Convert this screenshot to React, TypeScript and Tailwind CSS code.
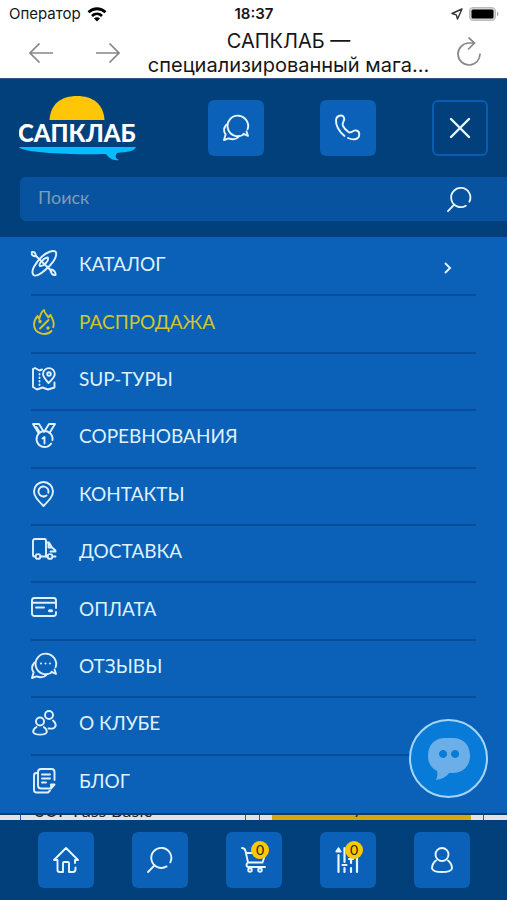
import type { ReactNode } from "react";

function Icon({ children, className = "size-[26px]" }: { children: ReactNode; className?: string }) {
  return (
    <svg viewBox="0 0 26 26" className={"shrink-0 overflow-visible " + className} fill="none" stroke="currentColor" strokeWidth="1.9" strokeLinecap="round" strokeLinejoin="round" aria-hidden="true">
      {children}
    </svg>
  );
}

const chatShape = (
  <>
    <path d="M24.600 14.300A10.300 10.300 0 1 0 19.800 20l.8-1.200 4.400 2-1.500-4.300" />
    <path d="M3.400 9.600C.4 13 .6 16.600 2.600 19.400L1 25l4.600-1.600c4.500 1.600 8.400.4 10.800-2.400" />
  </>
);
const searchShape = (
  <>
    <path d="M23.300 15.300A10 10 0 1 0 19.600 19.400" />
    <path d="M7.500 18.300 1 25" />
  </>
);

const menu: { label: string; icon: ReactNode; sale?: boolean; more?: boolean }[] = [
  {
    label: "КАТАЛОГ",
    more: true,
    icon: (
      <>
        <path d="M2.500 24C-1 20 5 11.500 10.500 6 16 .8 22-1 24.500.5c2 3-.5 9-6 14.500S6 26.500 2.500 24Z" />
        <path d="M8.800 15c-1.400-2.500 4.500-8.500 8-8.500 1.500 3-4.500 9.500-8 8.500Z" />
        <path d="M4.500 4.500 20.500 20" />
        <path d="M1 1c-.8 2.500.6 4.500 3.500 4.200C5 2.500 3.500.4 1 1ZM19.500 18.500c3-.3 5.500 2.700 5 5.500-3 .5-5-2-5-5.500Z" />
      </>
    ),
  },
  {
    label: "РАСПРОДАЖА",
    sale: true,
    icon: (
      <>
        <path d="M20.500 22C15 27.600 3.300 25 3 15.500 2.900 11.500 5 9 6.500 7l1.800 3C9.300 6.500 9.800 3 13 1c.2 3 3 5 4.300 7.500L19.500 6c1.600 3 3.500 6 3.200 10l-.6 2.200" />
        <path d="m9 19.500 8.500-8.500" />
        <circle cx="9" cy="12.500" r=".8" fill="currentColor" />
        <circle cx="17" cy="19" r=".8" fill="currentColor" />
      </>
    ),
  },
  {
    label: "SUP-ТУРЫ",
    icon: (
      <>
        <path d="M11 3.500 8.500 4.500 4 2 2 3v18l4 2.500 5.500-2 5.500 2 6.500-2V16.500" />
        <path d="M17.500 17C13.500 12.500 12 10.500 12 8a5.800 5.800 0 0 1 11.800 0c0 2.500-2.600 5.500-6.300 9Z" />
        <circle cx="18" cy="8" r="1.800" />
        <path d="M8.500 8v12" strokeDasharray=".5 3" />
      </>
    ),
  },
  {
    label: "СОРЕВНОВАНИЯ",
    icon: (
      <>
        <path d="M7.500 10 2 1h6l4 6.500M18.500 10 24 1h-6L13 9M5.500 4l3 5" />
        <path d="M20.200 20.500a8 8 0 1 1 1.300-3.500" />
        <path d="m11.500 15.500 2-1.500v6.500" />
      </>
    ),
  },
  {
    label: "КОНТАКТЫ",
    icon: (
      <>
        <path d="M12.500 25C7 19.500 3 15.500 3 10.500a9.500 9.500 0 0 1 19 0c0 5-4 9-9.500 14.500Z" />
        <path d="M12.500 15.500a5 5 0 1 1 4.800-3.700" />
        <path d="M12.500 15.500a5 5 0 0 0 3-1" />
      </>
    ),
  },
  {
    label: "ДОСТАВКА",
    icon: (
      <>
        <path d="M4 18.500H3c-1 0-1-1-1-2V3c0-1.500 1-2 2-2h9.500c1 0 1.500.5 1.500 1.500v16H9.500" />
        <path d="M15 4.500h3L21 9.500h-3.500V6M21 9.500l3.500 3M19.500 13.500h5M24.500 18.500h-2M15 18.500h1.500" />
        <circle cx="7" cy="18.500" r="2.400" />
        <circle cx="19" cy="18.500" r="2.400" />
      </>
    ),
  },
  {
    label: "ОПЛАТА",
    icon: (
      <>
        <path d="M25 16v1.500c0 1.500-1 2.500-2.500 2.500H3.500C2 20 1 19 1 17.500V4.500C1 3 2 2 3.500 2h19C24 2 25 3 25 4.500V12" />
        <path d="M1 6.800h24M5 11.500h8" />
        <path d="M18.500 14.800h2" strokeWidth="3" />
      </>
    ),
  },
  {
    label: "ОТЗЫВЫ",
    icon: (
      <>
        {chatShape}
        <path d="M10 10.500h.01M14.500 10.500h.01M19 10.500h.01" strokeWidth="2" />
      </>
    ),
  },
  {
    label: "О КЛУБЕ",
    icon: (
      <>
        <circle cx="9" cy="11.500" r="4" />
        <circle cx="18" cy="5" r="4" />
        <path d="M5.500 17C3 18.500 2 20 2.200 22c1.300 3.500 12.300 3.500 13.600 0 .2-2-.8-3.500-3-5M17.500 18.500c3.500.5 6.500-.7 7.200-2.800 0-2.200-1-4-2.700-5.200" />
      </>
    ),
  },
  {
    label: "БЛОГ",
    icon: (
      <>
        <path d="M7 4C7 2 8 1 10 1h10.500C22.500 1 23.500 2 23.500 4v8M23.500 16.500l-3.500 4H10c-2 0-3-1-3-3V4M23 16.500h-3v4" />
        <path d="M7 5H5.500C4 5 3 6 3 7.500V22c0 1.500 1 2.500 2.500 2.500H17l2-2M11 6.500h8M11 10.500h8M11 14.500h4" />
      </>
    ),
  },
];

const tile = "flex size-[56px] shrink-0 items-center justify-center rounded-md";

function Badge() {
  return <span className="absolute top-[9px] right-[13px] flex size-[18px] items-center justify-center rounded-full bg-[#ffc800] text-[14px] leading-none text-[#222]">0</span>;
}

export default function App() {
  return (
    <div className="relative flex min-h-screen flex-col overflow-hidden bg-[#0b60b7] font-['Lato','Noto_Sans',sans-serif] text-[#e8f6ff]">
      <header className="border-b border-[#32598f] bg-white font-['Inter','Noto_Sans',sans-serif] text-[#161616]">
        <div className="grid h-[28px] grid-cols-3 items-center pr-2 pl-[9px] text-[15px]">
          <div className="flex items-center gap-[6px]">
            <span>Оператор</span>
            <svg viewBox="0 0 20 15" className="h-[15px] w-[20px]" fill="none" stroke="black" strokeWidth="2.800" aria-hidden="true">
              <path d="M1.500 5.200c5-4.600 12-4.600 17 0M5 8.900c3-2.800 7-2.800 10 0" />
              <path d="m10 14.500-3-3c1.800-1.700 4.200-1.700 6 0Z" fill="black" stroke="none" />
            </svg>
          </div>
          <span className="text-center font-semibold">18:37</span>
          <div className="flex items-center justify-end gap-[6px]">
            <svg viewBox="0 0 12 12" className="size-[12px]" fill="none" stroke="#333" strokeWidth="1.400" strokeLinejoin="round" aria-hidden="true"><path d="M11 1 1 5.500l4.200 1.300L6.500 11Z" /></svg>
            <svg viewBox="0 0 30 14" className="h-[14px] w-[30px]" aria-hidden="true">
              <rect x=".5" y=".5" width="26" height="13" rx="3.500" fill="#d2d2d2" stroke="#bbb" />
              <rect x="2.500" y="2.500" width="22" height="9" rx="1.500" fill="black" />
              <path d="M28 4.500c2 1 2 4 0 5Z" fill="#aaa" />
            </svg>
          </div>
        </div>
        <div className="flex h-[50px] items-center justify-between pr-[26px] pl-[29px] text-[#888]">
          <div className="flex gap-[43px]">
            <button aria-label="Назад">
              <svg viewBox="0 0 24 20" className="h-[20px] w-[24px]" fill="none" stroke="currentColor" strokeWidth="1.700" aria-hidden="true"><path d="M24 10H1M10.500.5 1 10l9.500 9.500" /></svg>
            </button>
            <button aria-label="Вперёд">
              <svg viewBox="0 0 24 20" className="h-[20px] w-[24px]" fill="none" stroke="currentColor" strokeWidth="1.700" aria-hidden="true"><path d="M0 10h23M13.500.5 23 10l-9.500 9.500" /></svg>
            </button>
          </div>
          <h1 className="text-center text-[20px] leading-[24px] whitespace-nowrap text-[#161616]">
            САПКЛАБ —<br />специализированный мага...
          </h1>
          <button aria-label="Обновить" className="pb-[2px]">
            <svg viewBox="0 0 24 30" className="h-[30px] w-[24px]" fill="none" stroke="currentColor" strokeWidth="1.700" aria-hidden="true"><path d="M23 16.500A11 11 0 1 1 12 6h5.500M11.500.5 17.500 6l-6.500 6.500" /></svg>
          </button>
        </div>
      </header>

      <section className="bg-[#02407c] py-4">
        <div className="flex items-center justify-between pr-[19px] pl-[19px]">
          <a href="#" aria-label="САПКЛАБ" className="block">
            <svg viewBox="0 0 117 66" className="h-[66px] w-[117px]" aria-hidden="true">
              <path d="M30.500 25C31.500 9 42 1 58 1s26.500 8 27.500 24Z" fill="#ffc507" />
              <text x="-1" y="47" fontFamily="Lato, sans-serif" fontSize="24" fontWeight="900" fill="white">САПКЛАБ</text>
              <path d="M0 52h117c-1 4-9 5-19 6-2 3-2 5 2 7-6 1-10-2-13-6C57 60 3 58 0 52Z" fill="#08bdfd" />
            </svg>
          </a>
          <div className="flex gap-[56px]">
            <button aria-label="Написать" className={tile + " bg-[#0b60b7]"}><Icon>{chatShape}</Icon></button>
            <button aria-label="Позвонить" className={tile + " bg-[#0b60b7]"}>
              <Icon><path d="M9.500 21C4 16.500 .5 10 1 5 1.500.5 7-1 9 2.500c1.500 3.500-3 5-1 8.500 1.500 3 3.500 4.500 5.500 6 3 2 4.500-2.500 8-1.500 4 1 3.500 7.500-.5 8.500-3 .8-5.500.2-8-1" /></Icon>
            </button>
            <button aria-label="Закрыть меню" className={tile + " border-2 border-[#0b5cb0]"}>
              <Icon><path d="m4 4 18 18M22 4 4 22" strokeWidth="2.400" /></Icon>
            </button>
          </div>
        </div>
        <form className="mt-4 ml-[20px] flex h-[44px] items-center rounded-l-md bg-[#08539f] pr-[35px] pl-[18px]">
          <input type="search" aria-label="Поиск" placeholder="Поиск" className="min-w-0 flex-1 bg-transparent pb-[3px] text-[18px] outline-none placeholder:text-[#7f9cb9]" />
          <button type="button" aria-label="Найти"><Icon className="size-[25px]">{searchShape}</Icon></button>
        </form>
      </section>

      <nav aria-label="Главное меню" className="flex flex-1 flex-col pt-[2px] pr-[31px] pl-[31px]">
        {menu.map((item) => (
          <a key={item.label} href="#" className={"flex flex-1 items-center gap-[22px] border-b-2 border-[#064e9b] pb-[5px] text-[19px] leading-[24px] last:border-transparent " + (item.sale ? "text-[#d4c52c]" : "text-[#dff1ff]")}>
            <Icon>{item.icon}</Icon>
            <span>{item.label}</span>
            {item.more && (
              <svg viewBox="0 0 8 12" className="mt-[8px] mr-[24px] ml-auto h-[12px] w-[8px]" fill="none" stroke="currentColor" strokeWidth="2" aria-hidden="true"><path d="m1 1 5 5-5 5" /></svg>
            )}
          </a>
        ))}
      </nav>

      <div className="grid h-[7px] grid-cols-2 gap-[13px] overflow-hidden border-t-2 border-[#123b67] bg-[#e3e1e3] pr-[23px] pl-[20px] text-[18px] leading-[20px] text-[#222]">
        <div className="h-[5px] overflow-hidden border-x border-[#32598f] px-[14px]">
          <p className="-mt-[15px]">SUP Fass Basic</p>
        </div>
        <div className="h-[5px] overflow-hidden border-x border-[#32598f] px-[12px]">
          <div className="h-[5px] overflow-hidden bg-[#d3aa0c] text-center">
            <p className="-mt-[18px]">Купить</p>
          </div>
        </div>
      </div>

      <nav aria-label="Нижняя панель" className="flex h-[80px] items-center justify-between bg-[#02407c] pr-[37px] pl-[38px]">
        <button aria-label="Главная" className={tile + " bg-[#0b60b7]"}>
          <Icon><path d="M4.500 13H1L13 1l12 12h-3v3M4.500 13v10c0 1.200.6 2 2 2H10v-9c0-.8.400-1 1-1h4c.6 0 1 .2 1 1v9h4c1.500 0 2.500-1 2.500-3v-1.500" /></Icon>
        </button>
        <button aria-label="Поиск" className={tile + " bg-[#0b60b7]"}><Icon>{searchShape}</Icon></button>
        <button aria-label="Корзина" className={tile + " relative bg-[#0b60b7]"}>
          <Icon><path d="M1 1c2 0 3 1 3.500 3L7 15.500h14.500L24 8M5.500 6H17M7 15.500c-2 1-2 4.500.5 4.500H24" /><circle cx="9" cy="23" r="1.800" /><circle cx="19" cy="23" r="1.800" /></Icon>
          <Badge />
        </button>
        <button aria-label="Сравнение" className={tile + " relative bg-[#0b60b7]"}>
          <Icon><path d="M3.500 8v17M9.500 1v14M9.500 21v4M16 12v4M16 21v4M22 8v17M1.500 4.500l2-3 2 3ZM7.500 18h4M14 12h4" strokeWidth="2.200" /></Icon>
          <Badge />
        </button>
        <button aria-label="Профиль" className={tile + " bg-[#0b60b7]"}>
          <Icon><circle cx="13" cy="7.500" r="6.500" /><path d="M7 13.500c-2.500 2-4 5-4 8 1.500 4.700 18.500 4.700 20 0 0-3-1.500-6-4-8" /></Icon>
        </button>
      </nav>

      <button aria-label="Чат" className="absolute right-[19px] bottom-[102px] flex size-[79px] items-center justify-center rounded-full border-2 border-[#a5d6f8] bg-[#087bd8]">
        <svg viewBox="0 0 42 42" className="size-[42px]" aria-hidden="true">
          <path fillRule="evenodd" fill="#6caee8" d="M17 0h8c10 0 17 7 17 17.500S35 35 25 35h-4c-3 4-7 6-13 7 1-3 2-6 1-9-6-3-9-8-9-15.500C0 7 7 0 17 0Zm-2 12a4 4 0 1 0 .1 0Zm12 0a4 4 0 1 0 .1 0Z" />
        </svg>
      </button>
    </div>
  );
}
